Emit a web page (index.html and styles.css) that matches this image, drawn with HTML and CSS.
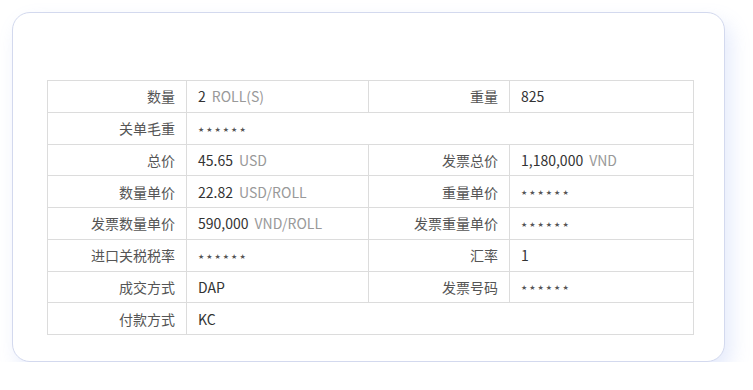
FILE: index.html
```html
<!DOCTYPE html>
<html lang="zh-CN">
<head>
<meta charset="utf-8">
<link rel="stylesheet" href="styles.css">
</head>
<body>
<div class="card">
  <table class="info">
    <colgroup>
      <col class="c1"><col class="c2"><col class="c3"><col class="c4">
    </colgroup>
    <tr>
      <td class="lbl">数量</td><td class="val">2<span class="unit">ROLL(S)</span></td>
      <td class="lbl">重量</td><td class="val">825</td>
    </tr>
    <tr>
      <td class="lbl">关单毛重</td><td class="val" colspan="3"><span class="stars">★★★★★★</span></td>
    </tr>
    <tr>
      <td class="lbl">总价</td><td class="val">45.65<span class="unit">USD</span></td>
      <td class="lbl">发票总价</td><td class="val">1,180,000<span class="unit">VND</span></td>
    </tr>
    <tr>
      <td class="lbl">数量单价</td><td class="val">22.82<span class="unit">USD/ROLL</span></td>
      <td class="lbl">重量单价</td><td class="val"><span class="stars">★★★★★★</span></td>
    </tr>
    <tr>
      <td class="lbl">发票数量单价</td><td class="val">590,000<span class="unit">VND/ROLL</span></td>
      <td class="lbl">发票重量单价</td><td class="val"><span class="stars">★★★★★★</span></td>
    </tr>
    <tr>
      <td class="lbl">进口关税税率</td><td class="val"><span class="stars">★★★★★★</span></td>
      <td class="lbl">汇率</td><td class="val">1</td>
    </tr>
    <tr>
      <td class="lbl">成交方式</td><td class="val">DAP</td>
      <td class="lbl">发票号码</td><td class="val"><span class="stars">★★★★★★</span></td>
    </tr>
    <tr>
      <td class="lbl">付款方式</td><td class="val" colspan="3">KC</td>
    </tr>
  </table>
</div>
</body>
</html>
```
FILE: styles.css
```css
html, body {
  margin: 0;
  padding: 0;
  background: #ffffff;
}
body {
  padding: 12px 0 0 12px;
  font-family: "Noto Sans CJK SC", "Noto Sans", sans-serif;
}
.card {
  box-sizing: border-box;
  width: 713px;
  height: 350px;
  background: #fff;
  border: 1px solid #d3d9ee;
  border-radius: 18px;
  box-shadow: 6px 10px 20px rgba(120, 150, 235, 0.2);
  padding: 67px 31px 0 34px;
}
.info {
  border-collapse: collapse;
  table-layout: fixed;
  width: 646px;
  font-size: 14px;
  line-height: 20px;
}
.c1 { width: 139px; }
.c2 { width: 182px; }
.c3 { width: 141px; }
.c4 { width: 184px; }
.info td {
  border: 1px solid #dcdcdc;
  height: 31.75px;
  padding: 0;
  box-sizing: border-box;
  white-space: nowrap;
}
.lbl {
  text-align: right;
  padding-right: 11px !important;
  color: #555;
}
.val {
  text-align: left;
  padding-left: 11px !important;
  color: #333;
}
.unit {
  color: #999;
  margin-left: 6px;
}
.stars {
  font-family: "DejaVu Sans", sans-serif;
  font-size: 7px;
  letter-spacing: 2px;
  color: #555;
  vertical-align: 1px;
}
```
